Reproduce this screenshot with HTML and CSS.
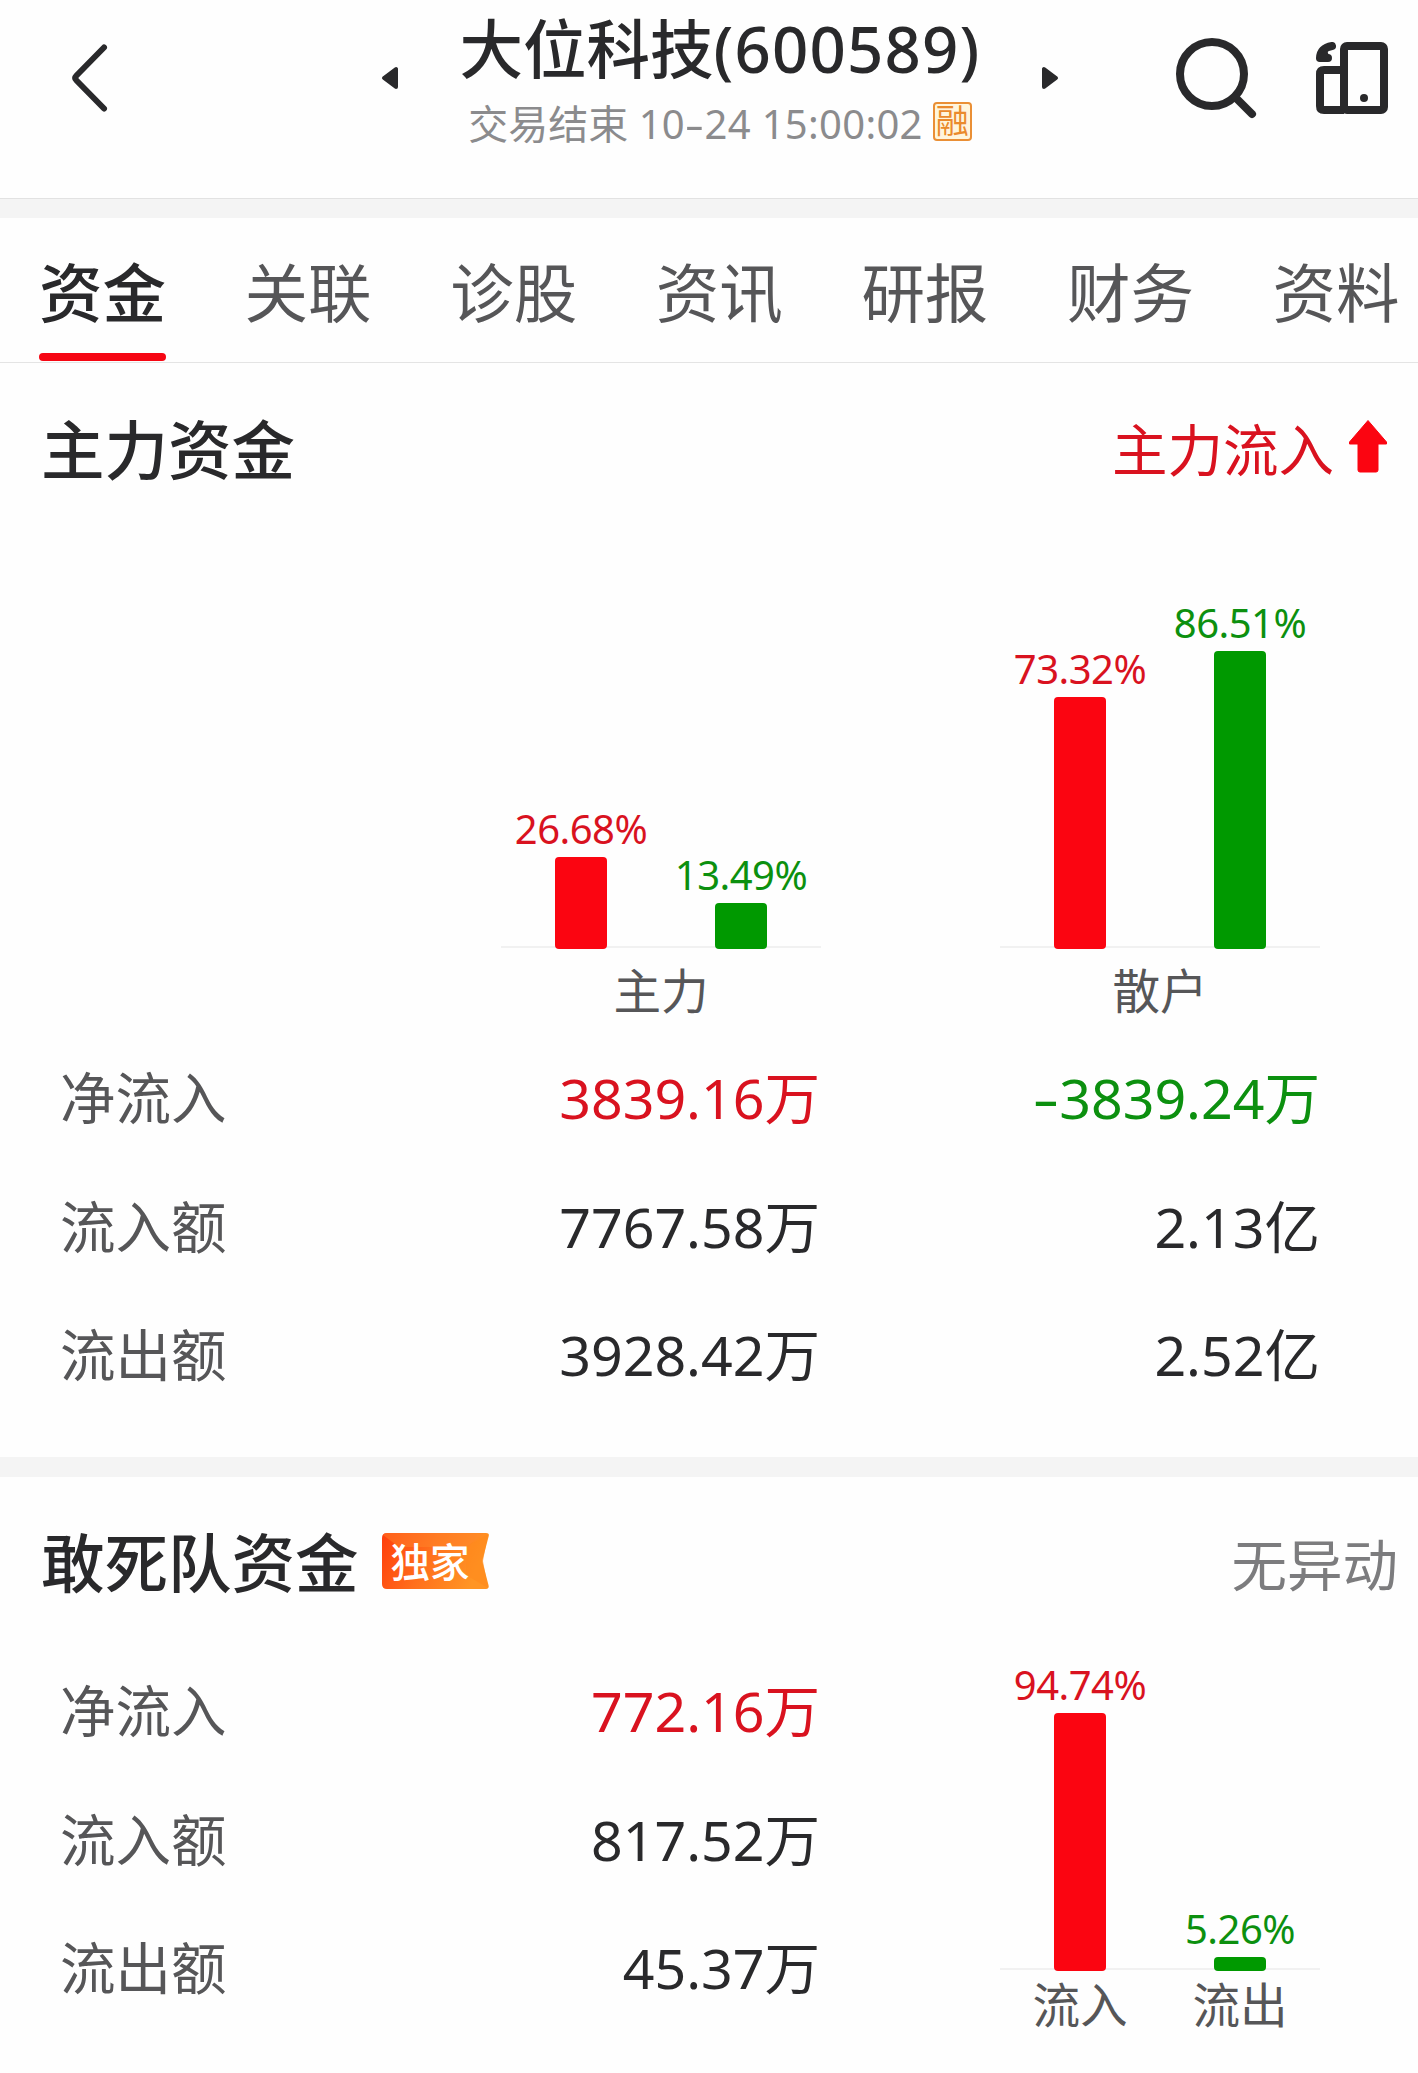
FILE: index.html
```html
<!DOCTYPE html>
<html lang="zh-CN">
<head>
<meta charset="utf-8">
<title>大位科技(600589)</title>
<link rel="stylesheet" href="styles.css">
</head>
<body>
<header class="topbar">
  <svg class="back" width="60" height="90" viewBox="0 0 60 90"><path d="M39 13.500 11.500 41.500Q9 44 11.500 46.500L39 74.500" fill="none" stroke="#29292b" stroke-width="6" stroke-linecap="round" stroke-linejoin="round"/></svg>
  <svg class="step" width="36" height="40" viewBox="0 0 36 40"><path d="M12 20 24 11v18z" fill="#29292b" stroke="#29292b" stroke-width="4" stroke-linejoin="round"/></svg>
  <div class="stock">
    <h1 class="stock-name">大位科技<span class="code">(600589)</span></h1>
    <div class="stock-status"><span>交易结束 <span class="time">10<span class="dash">-</span>24 15:00:02</span></span><span class="margin-tag">融</span></div>
  </div>
  <svg class="step" width="36" height="40" viewBox="0 0 36 40"><path d="M24 20 12 11v18z" fill="#29292b" stroke="#29292b" stroke-width="4" stroke-linejoin="round"/></svg>
  <div class="actions">
    <svg width="84" height="84" viewBox="0 0 84 84" fill="none" stroke="#29292b" stroke-width="8"><circle cx="39" cy="38" r="32"/><path d="m62 61 17 17" stroke-linecap="round"/></svg>
    <svg width="72" height="72" viewBox="0 0 72 72" fill="none" stroke="#29292b" stroke-width="8" stroke-linejoin="round"><rect x="28" y="4" width="40" height="64" rx="3"/><path d="M28 28H8q-4 0-4 4V64q0 4 4 4h20"/><circle cx="48" cy="56" r="4" fill="#29292b" stroke="none"/><path d="M16 4Q4.500 6 4 16H12" stroke-linecap="round"/><path d="M5 11 11 8l2 6H5z" fill="#29292b" stroke="none"/></svg>
  </div>
</header>
<div class="divider divider-top"></div>
<nav class="tabs">
  <a class="tab active">资金</a><a class="tab">关联</a><a class="tab">诊股</a><a class="tab">资讯</a><a class="tab">研报</a><a class="tab">财务</a><a class="tab">资料</a>
</nav>

<section class="main-funds">
  <div class="section-head">
    <h2>主力资金</h2>
    <div class="flow-in">主力流入<svg width="40" height="54" viewBox="0 0 40 54"><path d="M20 1.500 38.500 23v2H30V51q0 2-2 2H12q-2 0-2-2V25H1.500v-2z" fill="#fb0511" stroke="#fb0511" stroke-linejoin="round"/></svg></div>
  </div>
  <div class="charts">
    <div class="chart">
      <div class="plot">
        <div class="col"><span class="pct red">26.68%</span><i class="bar bar-red" style="height:92px"></i></div>
        <div class="col"><span class="pct green">13.49%</span><i class="bar bar-green" style="height:46px"></i></div>
      </div>
      <div class="axis"><span>主力</span></div>
    </div>
    <div class="chart">
      <div class="plot">
        <div class="col"><span class="pct red">73.32%</span><i class="bar bar-red" style="height:252px"></i></div>
        <div class="col"><span class="pct green">86.51%</span><i class="bar bar-green" style="height:298px"></i></div>
      </div>
      <div class="axis"><span>散户</span></div>
    </div>
  </div>
  <div class="rows">
    <div class="row"><span class="label">净流入</span><span class="red">3839.16万</span><span class="green"><span class="dash">-</span>3839.24万</span></div>
    <div class="row"><span class="label">流入额</span><span>7767.58万</span><span>2.13亿</span></div>
    <div class="row"><span class="label">流出额</span><span>3928.42万</span><span>2.52亿</span></div>
  </div>
</section>
<div class="divider"></div>

<section class="squad-funds">
  <div class="section-head">
    <h2>敢死队资金</h2>
    <div class="exclusive">
      <svg class="ribbon" width="107" height="56" viewBox="0 0 107 56"><defs><linearGradient id="g" x1="0" x2="1" y1="0" y2=".25"><stop offset="0" stop-color="#ff3d0c"/><stop offset=".5" stop-color="#ff6f1c"/><stop offset="1" stop-color="#ff9524"/></linearGradient></defs><path d="M5 0H104q4 0 2.500 4L101 25q-1 3 0 6l5.500 21q1 4-2.500 4H5q-5 0-5-5V5q0-5 5-5z" fill="url(#g)"/><path d="M1 2 17 14H84L101 1 86 0H5Q2 0 1 2z" fill="#ff8a2c" opacity=".45"/><path d="M84 14 106 1 101 28 106 55 84 42z" fill="#ff8a1c" opacity=".6"/></svg>
      <span class="exclusive-text">独家</span>
    </div>
    <div class="quiet">无异动</div>
  </div>
  <div class="squad-body">
    <div class="rows">
      <div class="row"><span class="label">净流入</span><span class="red">772.16万</span></div>
      <div class="row"><span class="label">流入额</span><span>817.52万</span></div>
      <div class="row"><span class="label">流出额</span><span>45.37万</span></div>
    </div>
    <div class="chart">
      <div class="plot">
        <div class="col"><span class="pct red">94.74%</span><i class="bar bar-red" style="height:258px"></i></div>
        <div class="col"><span class="pct green">5.26%</span><i class="bar bar-green" style="height:14px"></i></div>
      </div>
      <div class="axis"><span>流入</span><span>流出</span></div>
    </div>
  </div>
</section>
</body>
</html>
```
FILE: styles.css
```css
* { box-sizing: border-box; }
body {
  margin: 0;
  width: 1418px;
  height: 2073px;
  overflow: hidden;
  background: #fefefe;
  color: #29292b;
  font-family: "Noto Sans", "Noto Sans CJK SC", sans-serif;
}
svg { display: block; flex: none; }
h1, h2 { margin: 0; font-weight: 500; }

.topbar {
  display: grid;
  grid-template-columns: 372px 36px 624px 36px 1fr;
  align-items: start;
  height: 198px;
}
.back { margin: 34px 0 0 65px; }
.step { margin-top: 58px; }
.stock { display: flex; flex-direction: column; align-items: center; padding-top: 9px; }
.stock-name { font-size: 63.5px; line-height: 80px; white-space: nowrap; }
.code { letter-spacing: 1.2px; }
.stock-status {
  display: flex;
  align-items: center;
  gap: 10px;
  margin-top: 11px;
  color: #8b8b8d;
  font-size: 40px;
  line-height: 48px;
  white-space: nowrap;
}
.time { letter-spacing: .3px; }
.margin-tag {
  width: 39px;
  height: 39px;
  margin-top: -5px;
  border: 2px solid #ea8f35;
  border-radius: 4px;
  background: #fff5dc;
  color: #ea8a2c;
  font-size: 33px;
  line-height: 34px;
  text-align: center;
}
.dash { display: inline-block; transform: scaleX(1.5); margin: 0 .08em; }
.actions { display: flex; justify-content: flex-end; gap: 59px; padding: 36px 30px 0 0; }
.actions svg + svg { margin-top: 6px; }

.divider { height: 20px; background: #f4f4f4; }
.divider-top { border-top: 1px solid #e2e2e2; }

.tabs {
  display: flex;
  gap: 78.6px;
  height: 145px;
  padding-left: 39px;
  border-bottom: 1px solid #e4e4e4;
}
.tab {
  flex: none;
  width: 127px;
  padding-top: 35px;
  color: #565658;
  font-size: 63.5px;
  line-height: 80px;
}
.tab.active { color: #29292b; font-weight: 500; }
.tab.active::after {
  content: "";
  display: block;
  height: 8px;
  margin-top: 20px;
  border-radius: 4px;
  background: #f60613;
}

.section-head { display: flex; align-items: center; padding-left: 41px; }
.section-head h2 { font-size: 63.5px; line-height: 80px; }
.main-funds { height: 1094px; padding-top: 47px; }
.flow-in {
  display: flex;
  align-items: center;
  gap: 14px;
  margin: 0 30px 0 auto;
  color: #d9121f;
  font-size: 55.5px;
  line-height: 80px;
}
.flow-in svg { margin-top: -8px; }

.charts { display: flex; gap: 179px; margin: 69px 0 0 501px; }
.chart { width: 320px; flex: none; }
.plot {
  display: flex;
  align-items: flex-end;
  height: 390px;
  background: linear-gradient(#f1f1f1, #f1f1f1) 0 calc(100% - 1px) / 100% 2px no-repeat;
}
.col { flex: 1; display: flex; flex-direction: column; align-items: center; }
.pct { font-size: 40px; line-height: 57px; letter-spacing: -.5px; }
.bar { width: 52px; border-radius: 4px; }
.bar-red { background: #fb0511; }
.bar-green { background: #009900; }
.red { color: #d9121f; }
.green { color: #0c900f; }
.axis { display: flex; color: #565658; font-size: 47.6px; line-height: 60px; padding-top: 12px; }
.axis span { flex: 1; text-align: center; }

.rows { font-size: 55.5px; line-height: 80px; }
.row { display: grid; grid-template-columns: 420px 340px 500px; height: 128.7px; padding-left: 60px; text-align: right; }
.row .label { color: #565658; text-align: left; }
.main-funds .rows { margin-top: 37px; }

.squad-funds .section-head { padding-top: 46px; }
.exclusive { position: relative; width: 107px; height: 56px; margin: -5px 0 0 23px; }
.exclusive-text {
  position: absolute;
  left: 9px;
  top: 4px;
  color: #fff;
  font-size: 39.5px;
  line-height: 50px;
  font-weight: 500;
}
.quiet { margin: -2px 20px 0 auto; color: #7c7c7e; font-size: 55.5px; }
.squad-body { display: flex; padding-top: 67px; }
.squad-body .rows { padding-top: 1px; }
.squad-body .row { grid-template-columns: 420px 340px; }
.squad-body .chart { margin-left: 180px; }
.squad-body .plot { height: 301px; }
.squad-body .axis { padding-top: 4px; }
```
